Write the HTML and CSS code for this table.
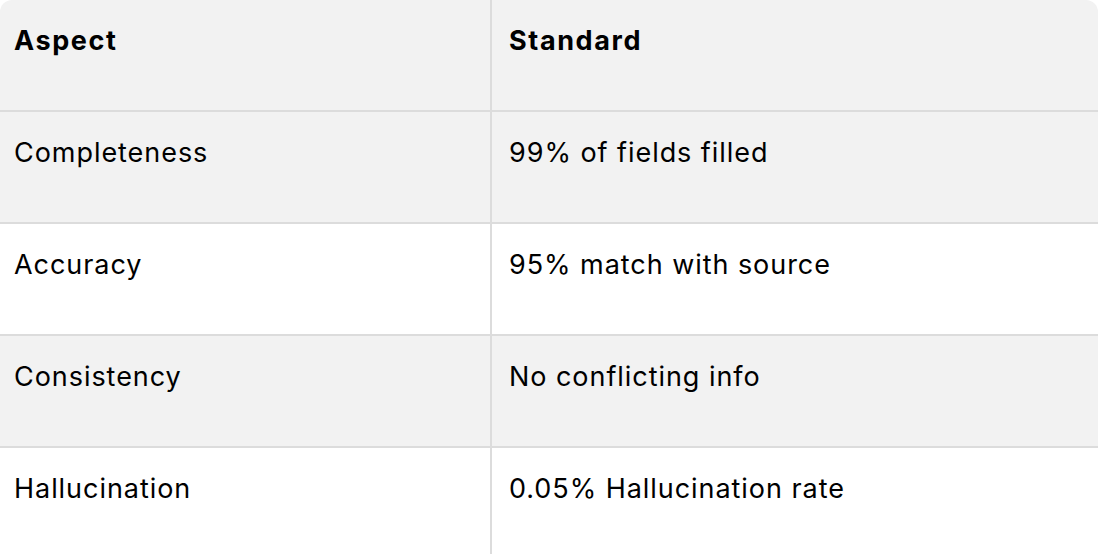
FILE: index.html
```html
<!DOCTYPE html>
<html>
<head>
<meta charset="utf-8">
<link rel="stylesheet" href="styles.css">
</head>
<body>
<div class="table">
  <div class="row head">
    <div class="cell c1">Aspect</div>
    <div class="cell c2">Standard</div>
  </div>
  <div class="row shade">
    <div class="cell c1">Completeness</div>
    <div class="cell c2">99% of fields filled</div>
  </div>
  <div class="row">
    <div class="cell c1">Accuracy</div>
    <div class="cell c2">95% match with source</div>
  </div>
  <div class="row shade">
    <div class="cell c1">Consistency</div>
    <div class="cell c2">No conflicting info</div>
  </div>
  <div class="row last">
    <div class="cell c1">Hallucination</div>
    <div class="cell c2">0.05% Hallucination rate</div>
  </div>
</div>
</body>
</html>
```
FILE: styles.css
```css
html, body {
  margin: 0;
  padding: 0;
  background: #ffffff;
}
.table {
  width: 1098px;
  height: 554px;
  border-radius: 12px;
  overflow: hidden;
  display: flex;
  flex-direction: column;
  font-family: Inter, "Noto Sans", sans-serif;
  font-size: 27px;
  letter-spacing: 0.95px;
  color: #000;
  background: #fff;
}
.row {
  display: grid;
  grid-template-columns: 492px 1fr;
  height: 110px;
  border-bottom: 2px solid #dcdcdc;
  flex: none;
}
.row.last {
  border-bottom: none;
  flex: 1;
}
.head, .shade {
  background: #f2f2f2;
}
.head .cell {
  font-weight: 700;
  letter-spacing: 1.6px;
}
.cell {
  padding-top: 24px;
  line-height: 34px;
}
.c1 {
  padding-left: 14px;
  border-right: 2px solid #dcdcdc;
}
.c2 {
  padding-left: 17px;
}
```
